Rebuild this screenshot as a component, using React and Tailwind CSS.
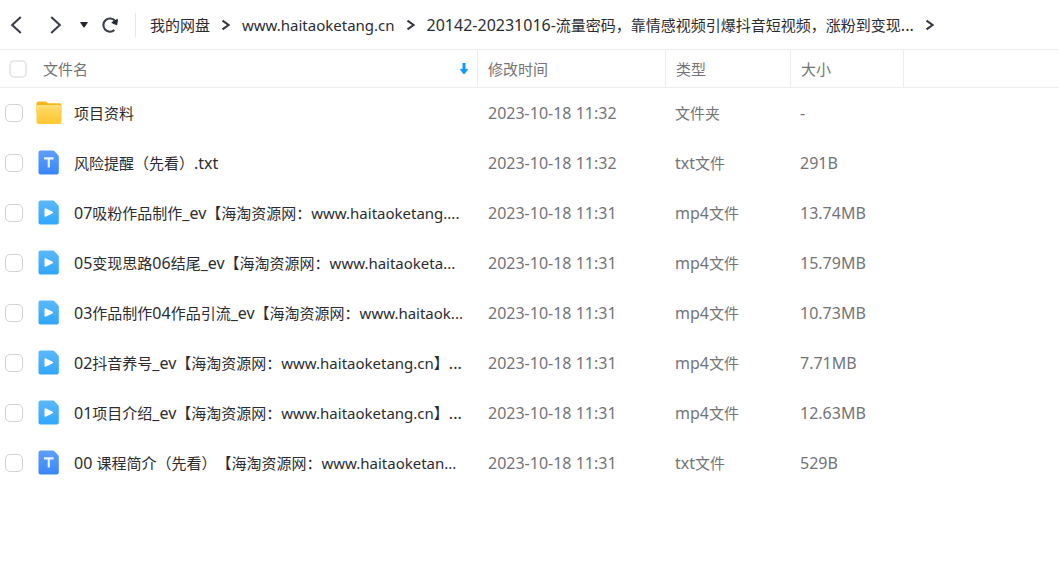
import { useState } from 'react';

const files = [
  { icon: 'folder', name: '项目资料', time: '2023-10-18 11:32', type: '文件夹', size: '-' },
  { icon: 'txt', name: '风险提醒（先看）.txt', time: '2023-10-18 11:32', type: 'txt文件', size: '291B' },
  { icon: 'mp4', name: '07吸粉作品制作_ev【海淘资源网：www.haitaoketang....', time: '2023-10-18 11:31', type: 'mp4文件', size: '13.74MB' },
  { icon: 'mp4', name: '05变现思路06结尾_ev【海淘资源网：www.haitaoketa...', time: '2023-10-18 11:31', type: 'mp4文件', size: '15.79MB' },
  { icon: 'mp4', name: '03作品制作04作品引流_ev【海淘资源网：www.haitaok...', time: '2023-10-18 11:31', type: 'mp4文件', size: '10.73MB' },
  { icon: 'mp4', name: '02抖音养号_ev【海淘资源网：www.haitaoketang.cn】...', time: '2023-10-18 11:31', type: 'mp4文件', size: '7.71MB' },
  { icon: 'mp4', name: '01项目介绍_ev【海淘资源网：www.haitaoketang.cn】...', time: '2023-10-18 11:31', type: 'mp4文件', size: '12.63MB' },
  { icon: 'txt', name: '00 课程简介（先看）【海淘资源网：www.haitaoketan...', time: '2023-10-18 11:31', type: 'txt文件', size: '529B' },
];

const crumbs = [
  '我的网盘',
  'www.haitaoketang.cn',
  '20142-20231016-流量密码，靠情感视频引爆抖音短视频，涨粉到变现...',
];

// Latin runs are set one step larger than the Chinese around them, site addresses are not
function Mixed({ text }) {
  return text.split(/([\x20-\x7e]+)/).filter(Boolean).map((part, i) => (
    /^[\x20-\x7e]/.test(part) && !part.startsWith('www.')
      ? <span key={i} className="text-[16px]">{part}</span>
      : part
  ));
}

function FolderIcon() {
  return (
    <svg width="26" height="24" viewBox="0 0 26 24" aria-hidden="true">
      <defs>
        <linearGradient id="folder" x1="0" y1="0" x2="0" y2="1">
          <stop offset="0" stopColor="#ffdc6b" />
          <stop offset="1" stopColor="#ffc62f" />
        </linearGradient>
      </defs>
      <path d="M0.5 2.5a2 2 0 0 1 2-2h7.2l2.6 1.8h11.2a2 2 0 0 1 2 2V12h-25z" fill="#f9b81a" />
      <rect x="0.5" y="4" width="25" height="19" rx="2" fill="url(#folder)" />
      <path d="M1.6 8.4V6.6A1.4 1.4 0 0 1 3 5.2h20a1.4 1.4 0 0 1 1.4 1.4v1.8" fill="none" stroke="#ffe89a" strokeWidth="0.8" />
    </svg>
  );
}

function FileIcon({ kind }) {
  return (
    <svg width="22" height="26" viewBox="0 0 22 26" aria-hidden="true">
      <defs>
        <linearGradient id="mp4" x1="0" y1="0" x2="0" y2="1">
          <stop offset="0" stopColor="#5bb8fc" />
          <stop offset="1" stopColor="#31a6fb" />
        </linearGradient>
        <linearGradient id="txt" x1="0" y1="0" x2="0" y2="1">
          <stop offset="0" stopColor="#5d9ffc" />
          <stop offset="1" stopColor="#3a86fa" />
        </linearGradient>
      </defs>
      <path
        d="M2.5 0.5h12.3q0.8 0 1.4 0.6l4 4.2q0.6 0.6 0.6 1.4v15.8a2 2 0 0 1-2 2H2.5a2 2 0 0 1-2-2V2.5a2 2 0 0 1 2-2z"
        fill={kind === 'mp4' ? 'url(#mp4)' : 'url(#txt)'}
      />
      {kind === 'mp4' ? (
        <path d="M7.2 9v7l7.2-3.5z" fill="#fff" stroke="#fff" strokeWidth="1.4" strokeLinejoin="round" />
      ) : (
        <path d="M6 8.4h9.6M10.8 8.4v9" fill="none" stroke="#eaf3ff" strokeWidth="2.2" />
      )}
    </svg>
  );
}

function Checkbox({ label, checked, onChange, className }) {
  return (
    <input
      type="checkbox"
      aria-label={label}
      checked={checked}
      onChange={onChange}
      className={`block size-[18px] shrink-0 appearance-none rounded-[5px] bg-white checked:bg-[#06a7ff] ${className}`}
    />
  );
}

function Separator() {
  return (
    <svg width="10" height="12" viewBox="0 0 10 12" className="shrink-0" aria-hidden="true">
      <path d="M1.5 1.6L7.6 6L1.5 10.4" fill="none" stroke="#32363f" strokeWidth="2" />
    </svg>
  );
}

function Toolbar() {
  return (
    <header className="flex h-[49px] items-center">
      <nav aria-label="导航" className="flex items-center pl-2">
        <button type="button" aria-label="后退" className="flex w-4 justify-center">
          <svg width="14" height="20" viewBox="0 0 14 20">
            <path d="M11.8 2L3.2 10L11.8 18" fill="none" stroke="#3b3f4a" strokeWidth="2.1" />
          </svg>
        </button>
        <button type="button" aria-label="前进" className="ml-6 flex w-4 justify-center">
          <svg width="14" height="20" viewBox="0 0 14 20">
            <path d="M2.2 2L10.8 10L2.2 18" fill="none" stroke="#3b3f4a" strokeWidth="2.1" />
          </svg>
        </button>
        <button type="button" aria-label="历史" className="ml-3 flex w-4 justify-center">
          <svg width="10" height="8" viewBox="0 0 10 8">
            <path d="M1.6 1.5h6.8L5 6.3z" fill="#23262f" stroke="#23262f" strokeLinejoin="round" />
          </svg>
        </button>
        <button type="button" aria-label="刷新" className="ml-2 flex w-5 justify-center">
          <svg width="18" height="18" viewBox="0 0 18 18">
            <path d="M14 4.8A6.6 6.6 0 1 0 13.4 14" fill="none" stroke="#3b3f4a" strokeWidth="2.1" />
            <path d="M16.4 3.4l-0.6 5.4l-5-2.2z" fill="#23262f" stroke="#23262f" strokeLinejoin="round" />
          </svg>
        </button>
      </nav>
      <ol className="ml-[15px] flex h-6 min-w-0 items-center gap-[11px] border-l border-[#e6e7ea] pl-[14px] text-[#2b2c31]">
        {crumbs.map((crumb) => (
          <li key={crumb} className="flex items-center gap-[11px] whitespace-nowrap">
            <a href="#"><Mixed text={crumb} /></a>
            <Separator />
          </li>
        ))}
      </ol>
    </header>
  );
}

export default function App() {
  const [selected, setSelected] = useState([]);
  const allSelected = selected.length === files.length;

  const toggle = (name) => {
    setSelected(selected.includes(name) ? selected.filter((n) => n !== name) : [...selected, name]);
  };

  return (
    <div
      lang="zh-CN"
      className="min-h-screen bg-white font-['Noto_Sans','Noto_Sans_CJK_SC',sans-serif] text-[15px] leading-6 [text-spacing-trim:space-all]"
    >
      <Toolbar />
      <table className="w-full table-fixed border-separate border-spacing-0 text-left text-[#737478]">
        <colgroup>
          <col className="w-[478px]" />
          <col className="w-[188px]" />
          <col className="w-[125px]" />
          <col className="w-[113px]" />
          <col />
        </colgroup>
        <thead>
          <tr className="h-[39px] *:border-y *:border-[#ededf0] *:p-0 *:font-normal">
            <th className="border-r">
              <div className="flex items-center pr-2 pl-[9px]">
                <Checkbox
                  label="全选"
                  checked={allSelected}
                  onChange={() => setSelected(allSelected ? [] : files.map((f) => f.name))}
                  className="border-2 border-[#e9e9ea]"
                />
                <span className="ml-4 flex-1">文件名</span>
                <svg width="10" height="14" viewBox="0 0 10 14" aria-label="降序">
                  <path d="M5 1v8" stroke="#0a9bff" strokeWidth="3" />
                  <path d="M1.4 7.4h7.2L5 12z" fill="#0a9bff" stroke="#0a9bff" strokeLinejoin="round" />
                </svg>
              </div>
            </th>
            <th className="border-r"><span className="pl-[10px]">修改时间</span></th>
            <th className="border-r"><span className="pl-[10px]">类型</span></th>
            <th className="border-r"><span className="pl-[10px]">大小</span></th>
            <td className="border-b-[#e1e3e8]" />
          </tr>
        </thead>
        <tbody>
          {files.map((file) => (
            <tr key={file.name} className="h-[50px] *:p-0 *:whitespace-nowrap">
              <td>
                <div className="flex items-center pl-[5px] text-[#2b2c31]">
                  <Checkbox
                    label={file.name}
                    checked={selected.includes(file.name)}
                    onChange={() => toggle(file.name)}
                    className="border border-[#cfd2d6]"
                  />
                  <span className="ml-[13px] flex w-[26px] justify-center">
                    {file.icon === 'folder' ? <FolderIcon /> : <FileIcon kind={file.icon} />}
                  </span>
                  <span className="ml-3"><Mixed text={file.name} /></span>
                </div>
              </td>
              <td><span className="pl-[10px]"><Mixed text={file.time} /></span></td>
              <td><span className="pl-[9px]"><Mixed text={file.type} /></span></td>
              <td><span className="pl-[9px]"><Mixed text={file.size} /></span></td>
              <td />
            </tr>
          ))}
        </tbody>
      </table>
    </div>
  );
}
